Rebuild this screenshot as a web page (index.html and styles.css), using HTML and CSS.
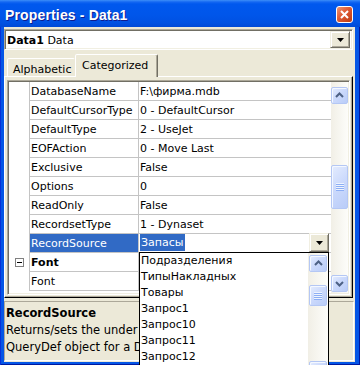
FILE: index.html
```html
<!DOCTYPE html>
<html>
<head>
<meta charset="utf-8">
<title>Properties - Data1</title>
<link rel="stylesheet" href="styles.css">
</head>
<body>
<div class="window">
  <div class="titlebar">
    <span class="title">Properties - Data1</span>
    <span class="close">
      <svg width="17" height="17" viewBox="0 0 17 17">
        <defs>
          <linearGradient id="cg" x1="0" y1="0" x2="1" y2="1">
            <stop offset="0" stop-color="#EE9A7A"/>
            <stop offset="0.45" stop-color="#DE5A33"/>
            <stop offset="1" stop-color="#B93810"/>
          </linearGradient>
        </defs>
        <rect x="0.5" y="0.5" width="16" height="16" rx="2.5" fill="url(#cg)" stroke="#fff"/>
        <path d="M5 5L12 12M12 5L5 12" stroke="#fff" stroke-width="2"/>
      </svg>
    </span>
  </div>
  <div class="client">
    <div class="combo">
      <div class="combo-text"><b>Data1</b> Data</div>
      <div class="btn3d combo-btn"><svg width="7" height="4" viewBox="0 0 7 4"><path d="M0 0H7L3.5 4Z" fill="#000"/></svg></div>
    </div>
    <div class="tabs">
      <div class="tab tab-alpha">Alphabetic</div>
      <div class="tab tab-cat active">Categorized</div>
    </div>
    <div class="tabpage">
      <div class="grid">
        <div class="rows">
          <div class="row"><div class="gut"></div><div class="name">DatabaseName</div><div class="val">F:\фирма.mdb</div></div>
          <div class="row"><div class="gut"></div><div class="name">DefaultCursorType</div><div class="val">0 - DefaultCursor</div></div>
          <div class="row"><div class="gut"></div><div class="name">DefaultType</div><div class="val">2 - UseJet</div></div>
          <div class="row"><div class="gut"></div><div class="name">EOFAction</div><div class="val">0 - Move Last</div></div>
          <div class="row"><div class="gut"></div><div class="name">Exclusive</div><div class="val">False</div></div>
          <div class="row"><div class="gut"></div><div class="name">Options</div><div class="val">0</div></div>
          <div class="row"><div class="gut"></div><div class="name">ReadOnly</div><div class="val">False</div></div>
          <div class="row"><div class="gut"></div><div class="name">RecordsetType</div><div class="val">1 - Dynaset</div></div>
          <div class="row sel"><div class="gut"></div><div class="name">RecordSource</div><div class="val"><span class="edit-sel">Запасы</span><span class="btn3d cell-btn"><svg width="7" height="4" viewBox="0 0 7 4"><path d="M0 0H7L3.5 4Z" fill="#000"/></svg></span></div></div>
          <div class="row cat"><div class="gut"><span class="minus"></span></div><div class="name"><b>Font</b></div><div class="val"></div></div>
          <div class="row"><div class="gut"></div><div class="name">Font</div><div class="val"></div></div>
        </div>
        <div class="vscroll grid-scroll">
          <div class="sbtn"><svg width="17" height="17" viewBox="0 0 17 17"><path d="M5 10L8.5 6.5L12 10" stroke="#4D6185" stroke-width="2" fill="none"/></svg></div>
          <div class="thumb grid-thumb"><span class="grip"></span></div>
          <div class="spacer"></div>
          <div class="sbtn"><svg width="17" height="17" viewBox="0 0 17 17"><path d="M5 7L8.5 10.5L12 7" stroke="#4D6185" stroke-width="2" fill="none"/></svg></div>
        </div>
      </div>
    </div>
    <div class="desc">
      <div class="desc-title">RecordSource</div>
      <div class="desc-text">Returns/sets the under</div>
      <div class="desc-text">QueryDef object for a D</div>
    </div>
  </div>
  <div class="dropdown">
    <ul class="items">
      <li>Подразделения</li>
      <li>ТипыНакладных</li>
      <li>Товары</li>
      <li>Запрос1</li>
      <li>Запрос10</li>
      <li>Запрос11</li>
      <li>Запрос12</li>
    </ul>
    <div class="vscroll list-scroll">
      <div class="sbtn"><svg width="17" height="17" viewBox="0 0 17 17"><path d="M5 10L8.5 6.5L12 10" stroke="#4D6185" stroke-width="2" fill="none"/></svg></div>
      <div class="thumb list-thumb"><span class="grip"></span></div>
      <div class="sbtn list-down"></div>
    </div>
  </div>
</div>
</body>
</html>
```
FILE: styles.css
```css
* { box-sizing: border-box; margin: 0; padding: 0; }
html, body { width: 360px; height: 365px; overflow: hidden; }
body {
  background: #0055E5;
  font-family: "DejaVu Sans", Verdana, sans-serif;
  font-size: 11px;
  color: #000;
}
.window {
  position: relative;
  width: 360px;
  height: 365px;
  display: flex;
  flex-direction: column;
  background: #0556E6;
  box-shadow: inset 1px 0 #0831D9, inset -1px 0 #0019A0, inset 0 -1px #0019A0;
}
.titlebar {
  height: 27px;
  flex: none;
  display: flex;
  justify-content: space-between;
  align-items: flex-start;
  padding: 0 7px 0 5px;
  background: linear-gradient(#3D8EF8 0, #1467F2 2px, #0058EE 4px, #0056EA 55%, #0051E2 85%, #0049D6 100%);
}
.title {
  font-family: "Liberation Sans", Arial, sans-serif;
  font-weight: bold;
  font-size: 14px;
  line-height: 16px;
  padding-top: 7px;
  color: #fff;
  letter-spacing: 0.15px;
  text-shadow: 1px 1px #0F1C8E;
}
.close { display: block; width: 17px; height: 17px; margin-top: 6px; }
.close svg { display: block; }

.client {
  flex: 1;
  margin: 0 5px 3px 4px;
  padding: 2px 2px 0 0;
  background: #ECE9D8;
  display: flex;
  flex-direction: column;
}

/* 3D classic button */
.btn3d {
  display: flex;
  align-items: center;
  justify-content: center;
  background: #ECE9D8;
  border: 1px solid;
  border-color: #F1EFE2 #716F64 #716F64 #F1EFE2;
  box-shadow: inset 1px 1px #fff, inset -1px -1px #ACA899;
}
.btn3d svg { display: block; }

.combo {
  height: 21px;
  flex: none;
  display: flex;
  background: #fff;
  border: 1px solid;
  border-color: #ACA899 #fff #fff #ACA899;
  box-shadow: inset 1px 1px #716F64, inset -1px -1px #F1EFE2;
  padding: 1px 2px 1px 1px;
}
.combo-text {
  flex: 1;
  padding: 2px 0 0 1px;
  line-height: 15px;
  white-space: nowrap;
}
.combo-btn { width: 20px; }

.tabs {
  height: 22px;
  flex: none;
  margin-top: 4px;
  padding-left: 3px;
  display: flex;
  align-items: flex-end;
  position: relative;
  z-index: 1;
}
.tab {
  height: 18px;
  padding: 4px 0 0 5px;
  line-height: 13px;
  background: #ECE9D8;
  border: 1px solid;
  border-bottom: none;
  border-color: #fff #716F64 transparent #fff;
  border-radius: 2px 2px 0 0;
  white-space: nowrap;
}
.tab-alpha { width: 68px; border-right-color: transparent; }
.tab.active {
  width: 83px;
  height: 23px;
  margin-bottom: -1px;
  padding-left: 6px;
  box-shadow: inset -1px 0 #ACA899;
}

.tabpage {
  height: 222px;
  flex: none;
  border: 1px solid;
  border-color: #fff #000 #000 #fff;
  box-shadow: inset -1px -1px #ACA899;
  padding: 3px 2px 1px 2px;
}
.grid {
  height: 215px;
  display: flex;
  background: #fff;
  border: 1px solid;
  border-color: #ACA899 #fff #fff #ACA899;
  box-shadow: inset 1px 1px #716F64, inset -1px -1px #F1EFE2;
  padding: 1px;
}
.rows { flex: 1; min-width: 0; }
.row { display: flex; height: 19px; }
.gut { width: 20px; flex: none; }
.name, .val {
  border-left: 1px solid #C4C4C4;
  border-bottom: 1px solid #C4C4C4;
  padding: 2px 0 0 1px;
  line-height: 16px;
  white-space: nowrap;
}
.name { width: 109px; flex: none; overflow: hidden; }
.val { flex: 1; min-width: 0; }
.sel .name { background: #316AC5; color: #fff; }
.sel .val {
  padding: 0 2px 0 1px;
  display: flex;
  justify-content: space-between;
  align-items: flex-start;
}
.edit-sel {
  display: inline-block;
  height: 17px;
  padding: 1px 2px 0 1px;
  line-height: 16px;
  background: #316AC5;
  color: #fff;
}
.cell-btn { width: 20px; height: 19px; margin-top: -1px; }
.cat .gut { display: flex; align-items: center; justify-content: center; }
.minus {
  position: relative;
  width: 9px;
  height: 9px;
  border: 1px solid #808080;
  background: #fff;
}
.minus::after {
  content: "";
  position: absolute;
  left: 1px;
  top: 3px;
  width: 5px;
  height: 1px;
  background: #000;
}

/* XP scrollbars */
.vscroll {
  flex: none;
  display: flex;
  flex-direction: column;
  align-items: center;
  background: linear-gradient(to right, #F1EFE6, #FDFDFA);
  overflow: hidden;
}
.grid-scroll { width: 17px; padding: 5px 0 1px; }
.sbtn, .thumb {
  width: 17px;
  flex: none;
  border: 1px solid #B4C7F4;
  border-radius: 2px;
  background: linear-gradient(135deg, #E4ECFE 0%, #CCDAFC 45%, #B9CCF8 100%);
  box-shadow: inset 1px 1px #F4F8FF;
  display: flex;
  align-items: center;
  justify-content: center;
}
.sbtn { height: 17px; }
.sbtn svg { display: block; margin: -1px; }
.grid-thumb { margin-top: 61px; height: 44px; }
.spacer { flex: 1; }
.grip {
  width: 8px;
  height: 8px;
  background: repeating-linear-gradient(#EEF4FE 0 1px, #8CAEF5 1px 2px);
}

.dropdown {
  position: absolute;
  left: 139px;
  top: 252px;
  width: 190px;
  height: 113px;
  border: 1px solid #000;
  border-bottom: none;
  background: #fff;
  display: flex;
  overflow: hidden;
  z-index: 2;
}
.items { flex: 1; list-style: none; }
.items li {
  height: 16px;
  line-height: 16px;
  padding-left: 1px;
  white-space: nowrap;
}
.list-scroll { width: 20px; padding-top: 2px; }
.list-scroll .sbtn, .list-scroll .thumb { width: 18px; }
.list-thumb { margin-top: 13px; height: 21px; }
.list-down { margin-top: 55px; }

.desc {
  flex: 1;
  margin: 3px -1px 1px 0;
  border: 1px solid;
  border-color: #ACA899 #fff #fff #ACA899;
  padding: 3px 0 0 1px;
  font-size: 11.5px;
  line-height: 17px;
  white-space: nowrap;
  overflow: hidden;
}
.desc-title { font-weight: bold; }
```
